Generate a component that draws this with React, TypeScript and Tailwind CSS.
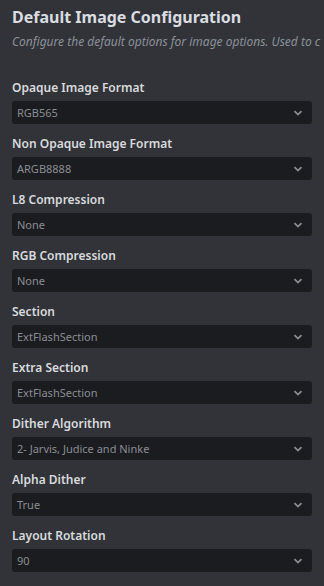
import React from "react";

const FIELDS = [
  { label: "Opaque Image Format", value: "RGB565" },
  { label: "Non Opaque Image Format", value: "ARGB8888" },
  { label: "L8 Compression", value: "None" },
  { label: "RGB Compression", value: "None" },
  { label: "Section", value: "ExtFlashSection" },
  { label: "Extra Section", value: "ExtFlashSection" },
  { label: "Dither Algorithm", value: "2- Jarvis, Judice and Ninke" },
  { label: "Alpha Dither", value: "True" },
  { label: "Layout Rotation", value: "90" },
];

const Chevron = () => (
  <svg width="10" height="6" viewBox="0 0 10 6" className="shrink-0">
    <path d="M1.5 1.2 L5 4.6 L8.5 1.2" fill="none" stroke="#8b8e94" strokeWidth="1.8" />
  </svg>
);

const App = () => {
  return (
    <div
      className="w-[324px] h-[586px] overflow-hidden bg-[#313338] pl-3 pt-[5px]"
      style={{ fontFamily: '"Noto Sans", "Open Sans", sans-serif' }}
    >
      <h1 className="text-[16px] font-bold text-[#d9dce0] leading-[24px] whitespace-nowrap">
        Default Image Configuration
      </h1>
      <p className="text-[12px] italic text-[#8c9199] leading-[16px] mt-[5px] whitespace-nowrap overflow-hidden">
        Configure the default options for image options. Used to c
      </p>

      <div className="mt-[30px] flex flex-col gap-[12px]">
        {FIELDS.map((f) => (
          <div key={f.label} className="flex flex-col">
            <label className="text-[12px] font-semibold text-[#d8dadd] leading-[16px]">
              {f.label}
            </label>
            <div className="mt-[5px] h-[23px] w-[300px] rounded-[3px] bg-[#1b1c1f] flex items-center justify-between pl-[5px] pr-[9px]">
              <span className="text-[11px] text-[#8a8d92] leading-none">{f.value}</span>
              <Chevron />
            </div>
          </div>
        ))}
      </div>
    </div>
  );
};

export default App;
